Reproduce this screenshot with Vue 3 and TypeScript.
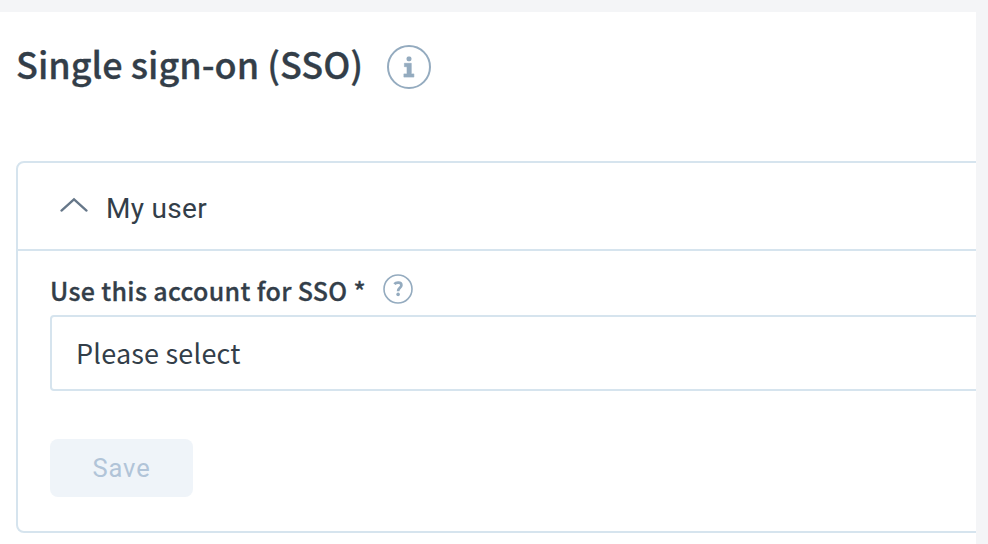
<script setup lang="ts">
import { ref } from 'vue'

const expanded = ref<boolean>(true)
const selected = ref<string>('Please select')
</script>

<template>
  <main class="page">
    <section class="sheet">
      <header class="heading">
        <h1 class="title"><span>Single sign-on (SSO)</span></h1>
        <svg class="info" viewBox="0 0 44 44" aria-hidden="true">
          <circle cx="22" cy="22" r="21" fill="none" stroke="currentColor" stroke-width="2" />
          <rect x="19.6" y="11.6" width="4.8" height="4.6" rx="1.6" fill="currentColor" />
          <path d="M17.4 18.3h6.9v10.6h2.6v3.2h-10v-3.2h3.1v-7.2h-2.6z" fill="currentColor" stroke="currentColor" stroke-width=".6" stroke-linejoin="round" />
        </svg>
      </header>

      <div class="panel">
        <div class="panel-head" @click="expanded = !expanded">
          <svg class="chevron" viewBox="0 0 28 16" aria-hidden="true">
            <path d="M1.5 13.6 14 2.4 26.5 13.6" fill="none" stroke="currentColor" stroke-width="2.3" stroke-linecap="round" />
          </svg>
          <span class="panel-title">My user</span>
        </div>
        <div v-if="expanded" class="panel-body">
          <div class="label-row">
            <label class="label">Use this account for SSO *</label>
            <svg class="help" viewBox="0 0 30 30" aria-hidden="true">
              <circle cx="15" cy="15" r="14" fill="none" stroke="currentColor" stroke-width="1.6" />
              <path d="M11.4 10.2C13 8.2 18.4 7.8 18.4 11.3C18.4 13.8 15.1 14 15.1 17.2" fill="none" stroke="currentColor" stroke-width="2.7" />
              <circle cx="15.1" cy="20.4" r="1.8" fill="currentColor" />
            </svg>
          </div>
          <div class="select"><span>{{ selected }}</span></div>
          <button class="save" type="button" disabled>Save</button>
        </div>
      </div>
    </section>
  </main>
</template>

<style>
body {
  background: #f4f5f7;
}
</style>

<style scoped>
.page {
  box-sizing: border-box;
  width: 988px;
  height: 544px;
  padding: 12px 12px 0 0;
  overflow: hidden;
  background: #f4f5f7;
  color: #333e49;
  font-family: "Noto Sans CJK JP", "Noto Sans", sans-serif;
}
.sheet {
  box-sizing: border-box;
  height: 532px;
  padding: 33px 0 0 16px;
  overflow: hidden;
  background: #fff;
}
.heading {
  display: flex;
  align-items: flex-start;
  height: 44px;
}
.title {
  width: 371px;
  margin: 0;
  font-size: 36px;
  font-weight: 500;
  line-height: 36px;
  white-space: nowrap;
  -webkit-text-stroke: 0.3px currentColor;
}
.info {
  width: 44px;
  height: 44px;
  color: #94abbf;
}
.panel {
  box-sizing: border-box;
  width: 1000px;
  height: 372px;
  margin-top: 72px;
  border: 2px solid #d6e4ee;
  border-radius: 8px;
}
.panel-head {
  display: flex;
  align-items: center;
  box-sizing: border-box;
  height: 88px;
  padding: 6px 0 0 42px;
  border-bottom: 2px solid #d6e4ee;
}
.chevron {
  width: 28px;
  height: 16px;
  margin: -8px 18px 0 0;
  color: #667789;
}
.panel-title {
  font-family: Roboto, sans-serif;
  font-size: 28px;
  line-height: 40px;
  letter-spacing: 0.3px;
}
.panel-body {
  padding: 23px 0 0 32px;
}
.label-row {
  display: flex;
  height: 41px;
}
.label {
  width: 333px;
  font-size: 25px;
  font-weight: 500;
  line-height: 32px;
  letter-spacing: 0.33px;
  white-space: nowrap;
  -webkit-text-stroke: 0.3px currentColor;
}
.help {
  width: 30px;
  height: 30px;
  color: #94abbf;
}
.select {
  box-sizing: border-box;
  height: 76px;
  padding-left: 24px;
  border: 2px solid #d6e4ee;
  border-radius: 4px;
  font-size: 27px;
  line-height: 72px;
  letter-spacing: 0.2px;
}
.save {
  display: block;
  width: 143px;
  height: 58px;
  margin-top: 48px;
  padding: 0;
  border: 0;
  border-radius: 8px;
  background: #eff4f9;
  color: #b1c4d8;
  font-family: Roboto, sans-serif;
  font-size: 25.5px;
  letter-spacing: 0.9px;
}
</style>
